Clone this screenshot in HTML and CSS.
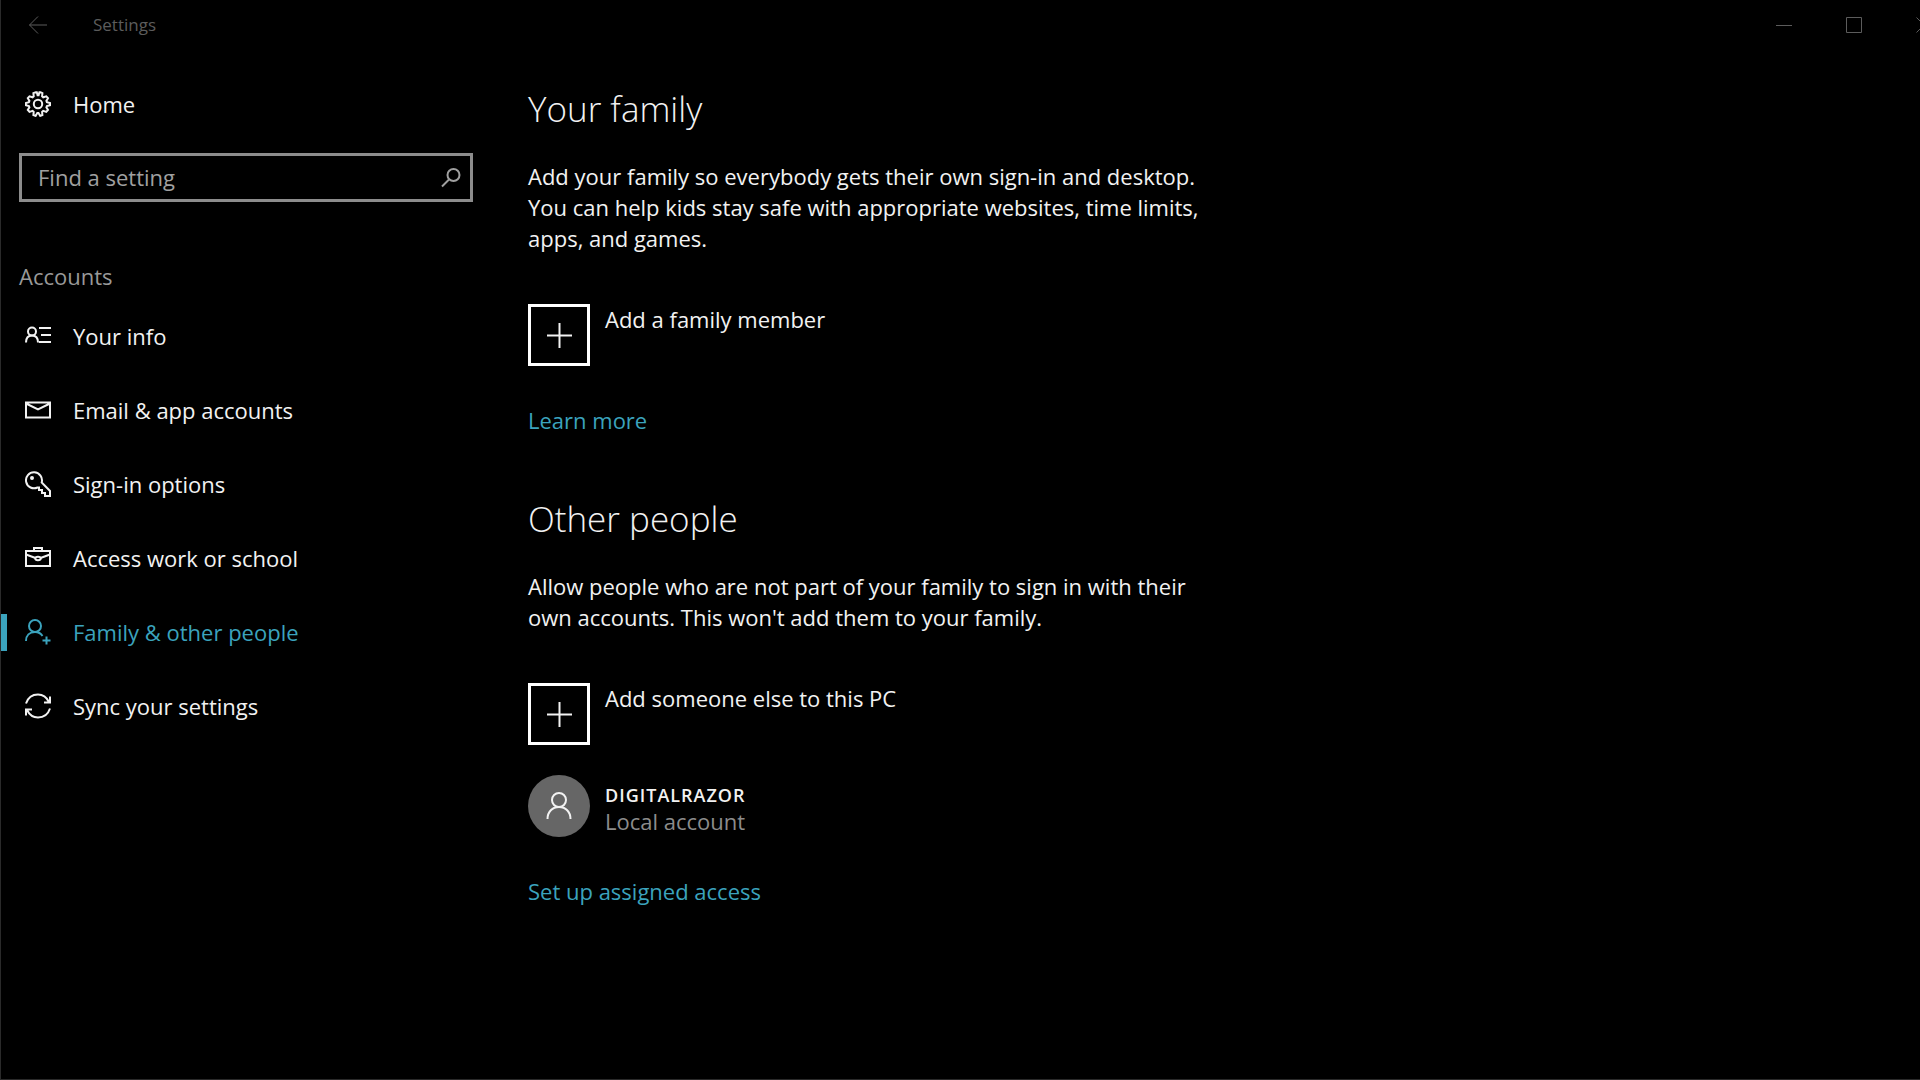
FILE: index.html
```
<!DOCTYPE html>
<html lang="en">
<head>
    <meta charset="UTF-8">
    <meta name="viewport" content="width=device-width, initial-scale=1.0">
    <title>Settings</title>
    <link rel="stylesheet" href="styles.css">
</head>
<body>
    <header class="titlebar">
        <button class="back" aria-label="Back">
            <svg width="20" height="20" viewBox="0 0 20 20"><path d="M19 10H1.500M10 1.500L1.500 10l8.500 8.500"/></svg>
        </button>
        <span class="title">Settings</span>
        <div class="window-buttons">
            <button aria-label="Minimize">
                <svg width="16" height="16" viewBox="0 0 16 16"><path d="M0 8.500h16"/></svg>
            </button>
            <button aria-label="Maximize">
                <svg width="16" height="16" viewBox="0 0 16 16"><path d="M.5.5h15v15H.5z"/></svg>
            </button>
            <button aria-label="Close">
                <svg width="16" height="16" viewBox="0 0 16 16"><path d="M.5.5l15 15M15.500.5l-15 15"/></svg>
            </button>
        </div>
    </header>
    <div class="container">
        <aside class="sidebar">
            <a class="nav-item home" href="#">
                <svg class="icon" viewBox="0 0 26 26">
                    <path d="M10.800 1.300h1l.8 3h1l.8-3h1l2 .8-.3 3.200 1.100 1 3.100-1 1.700 1.900-1.600 2.700.5 1.300 3.100.8v2.200l-3.100.8-.5 1.300 1.600 2.700-1.700 1.900-3.100-1-1.100 1 .3 3.200-2.200.8-1.700-2.900h-1.200l-1.700 2.900-2.200-.8.3-3.200-1.100-1-3.100 1L2.800 19l1.600-2.700-.5-1.300-3-.8V12l3-.8.5-1.300-1.600-2.700 1.700-1.900 3.100 1 1.100-1-.3-3.200z"/>
                    <circle cx="13" cy="13" r="4.200"/>
                </svg>
                Home
            </a>
            <div class="search">
                <input type="text" id="search" placeholder="Find a setting" aria-label="Find a setting">
                <svg width="20" height="20" viewBox="0 0 20 20"><circle cx="12.500" cy="7" r="6"/><path d="M8 11.500L1 18.500"/></svg>
            </div>
            <h3>Accounts</h3>
            <nav>
                <a class="nav-item" href="#">
                    <svg class="icon" viewBox="0 0 26 26"><circle cx="7" cy="8.500" r="4"/><path d="M1 19.500c0-4.500 2.500-7 6-7s6 2.500 6 7M14 5h12M16 12h10M14 19h12"/></svg>
                    Your info
                </a>
                <a class="nav-item" href="#">
                    <svg class="icon" viewBox="0 0 26 26"><path d="M1 5.500h24v15H1zM1 6.500l12 6 12-6"/></svg>
                    Email &amp; app accounts
                </a>
                <a class="nav-item" href="#">
                    <svg class="icon" viewBox="0 0 26 26"><path d="M12.500 16.500a8 8 0 1 1 4.200-5L25 20v5h-5v-3h-3v-3h-3v-2.500z"/><circle cx="7" cy="7" r="1"/></svg>
                    Sign-in options
                </a>
                <a class="nav-item" href="#">
                    <svg class="icon" viewBox="0 0 26 26"><path d="M1 6h24v15H1zM9 6V3h8v3M1 9.500l9.500 3.500M25 9.500L15.500 13"/><ellipse cx="13" cy="13.500" rx="2.700" ry="1.800"/></svg>
                    Access work or school
                </a>
                <a class="nav-item active" href="#">
                    <svg class="icon" viewBox="0 0 26 26"><circle cx="10" cy="7" r="6"/><path d="M1 22c0-5.500 3.500-9 9-9 3.500 0 6 1.500 7.500 4M21.500 17.500v8M17.500 21.500h8"/></svg>
                    Family &amp; other people
                </a>
                <a class="nav-item" href="#">
                    <svg class="icon" viewBox="0 0 26 26"><path d="M1 10.500C3 4.500 7.500 1.500 13 1.500c4.500 0 8.500 2.500 11 7.500M25 3.500V9.500h-6M25 15.500c-2 6-6.500 9-12 9-4.500 0-8.500-2.500-11-7.500M1 22.500v-6h6"/></svg>
                    Sync your settings
                </a>
            </nav>
        </aside>
        <main class="content">
            <section>
                <h2>Your family</h2>
                <p>Add your family so everybody gets their own sign-in and desktop. You can help kids stay safe with appropriate websites, time limits, apps, and games.</p>
                <button class="add">
                    <span class="plus"><svg width="25" height="25" viewBox="0 0 25 25"><path d="M12.500 0v25M0 12.500h25"/></svg></span>
                    Add a family member
                </button>
                <a class="link" href="#">Learn more</a>
            </section>
            <section>
                <h2>Other people</h2>
                <p>Allow people who are not part of your family to sign in with their own accounts. This won't add them to your family.</p>
                <button class="add">
                    <span class="plus"><svg width="25" height="25" viewBox="0 0 25 25"><path d="M12.500 0v25M0 12.500h25"/></svg></span>
                    Add someone else to this PC
                </button>
                <button class="account">
                    <span class="avatar"><svg width="26" height="28" viewBox="0 0 26 28"><circle cx="13" cy="8" r="7"/><path d="M1.500 27c0-7.500 5-12 11.500-12s11.500 4.500 11.500 12"/></svg></span>
                    <span class="account-text">
                        <span class="account-name">DIGITALRAZOR</span>
                        <span class="account-type">Local account</span>
                    </span>
                </button>
                <a class="link" href="#">Set up assigned access</a>
            </section>
        </main>
    </div>
</body>
</html>
```
FILE: styles.css
```
* {
    box-sizing: border-box;
}
body {
    margin: 0;
    min-height: 100vh;
    font-family: "Open Sans", "Noto Sans", sans-serif;
    font-size: 22px;
    line-height: 31px;
    color: #f2f2f2;
    background-color: #000;
    border-left: 1px solid #2a2a2a;
    border-bottom: 1px solid #2a2a2a;
    overflow-x: hidden;
}
svg {
    fill: none;
    stroke: currentColor;
    stroke-width: 2;
    flex-shrink: 0;
}
button {
    padding: 0;
    border: none;
    background: none;
    font: inherit;
    color: inherit;
    text-align: left;
    cursor: pointer;
}
a {
    color: inherit;
    text-decoration: none;
}
h2, h3, p {
    margin: 0;
}
.titlebar {
    display: flex;
    align-items: center;
    height: 49px;
    color: #5c5c5c;
    font-size: 17px;
}
.titlebar button {
    display: flex;
}
.titlebar svg {
    stroke-width: 1;
}
.back {
    margin-left: 27px;
}
.title {
    margin-left: 45px;
}
.window-buttons {
    display: flex;
    gap: 54px;
    margin-left: auto;
    margin-right: -12px;
}
.container {
    display: flex;
    gap: 55px;
    padding: 18px 18px 40px;
}
.sidebar {
    width: 454px;
    flex-shrink: 0;
}
.nav-item {
    display: flex;
    align-items: center;
    gap: 22px;
    height: 74px;
    margin-left: -18px;
    padding-left: 24px;
}
.nav-item.active {
    color: #3ba3bd;
    background: linear-gradient(#3ba3bd, #3ba3bd) left center / 6px 37px no-repeat;
}
.icon {
    width: 26px;
    height: 26px;
}
.search {
    display: flex;
    align-items: center;
    height: 49px;
    margin-top: 12px;
    padding: 0 9px 0 16px;
    border: 3px solid #8c8c8c;
    color: #a0a0a0;
}
.search input {
    flex: 1;
    min-width: 0;
    padding: 0;
    border: none;
    outline: none;
    background: none;
    font: inherit;
    color: inherit;
}
.search input::placeholder {
    color: #a0a0a0;
    opacity: 1;
}
h3 {
    margin-top: 59px;
    margin-bottom: 7px;
    font-size: 22px;
    font-weight: 400;
    color: #999;
}
.content {
    flex: 1;
    max-width: 680px;
    padding-top: 19px;
}
h2 {
    margin-bottom: 29px;
    font-size: 35px;
    font-weight: 300;
    line-height: 46px;
}
.add, .account {
    display: flex;
    gap: 15px;
}
.add {
    margin-top: 50px;
}
.plus, .avatar {
    display: flex;
    align-items: center;
    justify-content: center;
    width: 62px;
    height: 62px;
}
.plus {
    border: 3px solid #fff;
}
.avatar {
    border-radius: 50%;
    background-color: #666;
}
.account {
    align-items: center;
    margin-top: 30px;
}
.account-text {
    display: flex;
    flex-direction: column;
    padding-top: 4px;
    line-height: 26px;
}
.account-name {
    font-size: 18px;
    font-weight: 600;
    letter-spacing: 1px;
}
.account-type {
    color: #8c8c8c;
}
.link {
    display: block;
    width: fit-content;
    margin-top: 39px;
    color: #3ba3bd;
}
section + section {
    margin-top: 60px;
}
```
